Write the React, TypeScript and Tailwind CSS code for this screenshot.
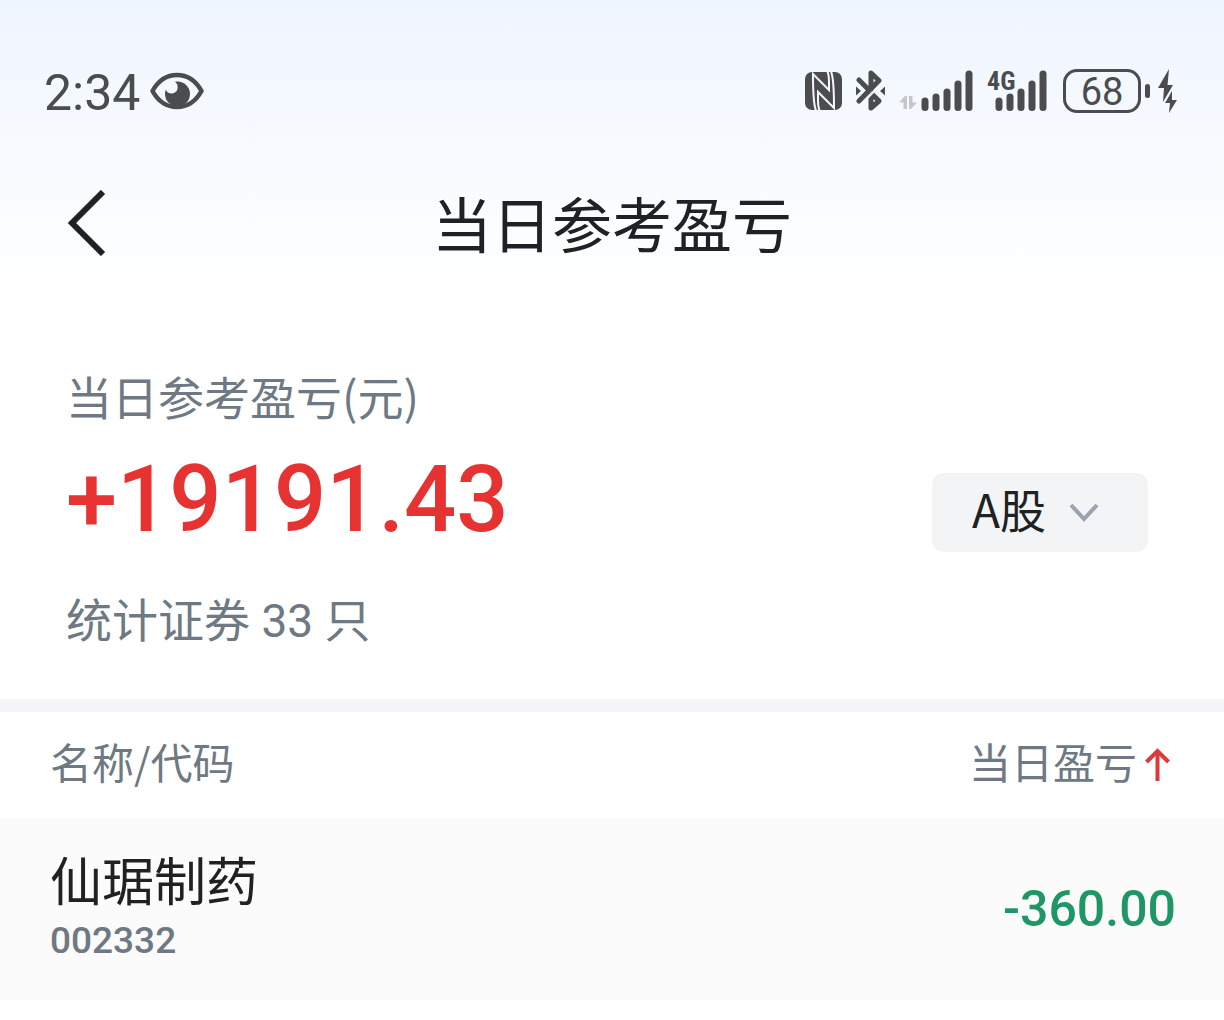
import { useState } from "react";

const latin = "font-[Roboto,'Noto_Sans_CJK_SC',sans-serif]";
const cjk = "font-['Noto_Sans_CJK_SC',sans-serif]";

const holdings = [{ name: "仙琚制药", code: "002332", profit: "-360.00" }];

function EyeIcon() {
  return (
    <svg width="54" height="38" viewBox="0 0 54 38" fill="none" aria-hidden="true">
      <path
        d="M2.5 19C8 9 16.5 3 27 3s19 6 24.500 16C46 29 37.500 35 27 35S8 29 2.500 19z"
        stroke="#4a4c4e"
        strokeWidth="4.500"
        strokeLinejoin="round"
      />
      <circle cx="27.500" cy="22" r="12.500" fill="#4a4c4e" />
      <path d="M14 12l7-4c5 1 7.500 4.500 6.500 9-1 4-6 6-9.500 3.500-1.500-1-2-2.500-2.500-4z" fill="#f4f8ff" />
      <path d="M23 9.500c3 0 5 1.500 6 4l3-2.500z" fill="#4a4c4e" />
    </svg>
  );
}

function NfcIcon() {
  return (
    <svg width="37" height="38" viewBox="0 0 37 38" fill="none" aria-hidden="true">
      <rect width="37" height="38" rx="7" fill="#4a4c4e" />
      <g stroke="#f5f8fe" strokeWidth="2">
        <path d="M11 38.500C9 34 8 28 8 2L24 18V9c0-4-.5-7-1.500-9.500" />
        <path d="M26 -.5C28 4 29 10 29 36L13 20v9c0 4 .5 7 1.500 9.500" />
      </g>
    </svg>
  );
}

function BluetoothIcon() {
  return (
    <svg width="30" height="42" viewBox="0 0 30 42" aria-hidden="true">
      <g fill="none" stroke="#4a4c4e" strokeWidth="5" strokeLinecap="round" strokeLinejoin="round">
        <path d="M3 10l10 10M15 19V3l8 7.500L3 31" />
        <path d="M15 29v9l8-7-6-6z" />
      </g>
      <path d="M10 30L27 12.500" stroke="#f5f8fe" strokeWidth="1.500" />
      <path d="M0 16.500L5 21 0 25.500zM29 16.500L24 21l5 4.500z" fill="#4a4c4e" />
    </svg>
  );
}

function DataArrowsIcon() {
  return (
    <svg width="18" height="14" viewBox="0 0 18 14" fill="#c3c6ca" aria-hidden="true">
      <path d="M0 6.500L6 0h2v13H4.500V6.500zM10 0h3.500v6.500H18L12 13h-2z" />
    </svg>
  );
}

function SignalIcon({ label }: { label?: string }) {
  return (
    <svg
      width={label ? 62 : 52}
      height="54"
      viewBox={label ? "-10 -6 62 54" : "0 -6 52 54"}
      role="img"
      aria-label="信号"
    >
      <path
        d="M4 31v6.500M15 27v10.500M26 22v15.500M37 14v23.500M48 4v33.500"
        stroke="#4a4c4e"
        strokeWidth="7"
        strokeLinecap="round"
      />
      {label && (
        <text x="-8" y="20" fontSize="26" fontWeight="700" fill="#4a4c4e" fontFamily="'Roboto Condensed', Roboto, sans-serif">
          {label}
        </text>
      )}
    </svg>
  );
}

function BoltIcon() {
  return (
    <svg width="19" height="44" viewBox="0 0 19 44" fill="#4a4c4e" aria-hidden="true">
      <path d="M11 0L0 19h6L5 33 15 16H9.500z" />
      <path d="M14 22L7 34h5l-1 10 8-13h-5z" />
    </svg>
  );
}

function StatusBar() {
  return (
    <div className="flex items-center justify-between pt-[67px] pr-[47px] pl-[44px] text-[#4a4c4e]">
      <div className="flex h-12 items-center gap-[10px]">
        <time className={`pt-1 text-[50px] leading-[48px] ${latin}`}>2:34</time>
        <EyeIcon />
      </div>
      <div className="flex h-12 items-center">
        <NfcIcon />
        <span className="ml-[14px]">
          <BluetoothIcon />
        </span>
        <span className="mt-6 mr-1 ml-[13px]">
          <DataArrowsIcon />
        </span>
        <SignalIcon />
        <span className="ml-3">
          <SignalIcon label="4G" />
        </span>
        <div
          className={`ml-4 flex h-11 w-[78px] items-center justify-center rounded-[14px] border-[3px] border-[#4a4c4e] pt-[2px] text-[38px] leading-none ${latin}`}
        >
          68
        </div>
        <span className="ml-1 h-[14px] w-[5px] rounded-full bg-[#4a4c4e]" />
        <span className="ml-2">
          <BoltIcon />
        </span>
      </div>
    </div>
  );
}

function MarketSelect() {
  const [market, setMarket] = useState("A股");

  return (
    <div className="relative">
      <select
        aria-label="市场"
        value={market}
        onChange={(e) => setMarket(e.target.value)}
        className={`h-[79px] w-[216px] appearance-none rounded-xl bg-[#f3f4f6] pb-2 pl-10 text-[46px] leading-[60px] text-[#202122] ${cjk}`}
      >
        <option>A股</option>
        <option>港股</option>
      </select>
      <svg
        className="pointer-events-none absolute top-[30px] right-[49px]"
        width="30"
        height="20"
        viewBox="0 0 30 20"
        fill="none"
        aria-hidden="true"
      >
        <path d="M2 2l13 14L28 2" stroke="#9aa4ae" strokeWidth="4" />
      </svg>
    </div>
  );
}

export default function App() {
  return (
    <div className={`bg-white text-[#202122] ${cjk}`}>
      <header className="h-[300px] bg-linear-to-b from-[#eff5ff] to-white">
        <StatusBar />
        <div className="grid grid-cols-[1fr_auto_1fr] items-center px-[66px] pt-16">
          <button type="button" aria-label="返回" className="w-10">
            <svg width="40" height="66" viewBox="0 0 40 66" fill="none" aria-hidden="true">
              <path d="M37 2L6 33l31 31" stroke="#202122" strokeWidth="6" />
            </svg>
          </button>
          <h1 className="pb-[2px] text-[60px] leading-[86px]">当日参考盈亏</h1>
        </div>
      </header>

      <section className="flex items-center justify-between pt-[62px] pr-[76px] pb-[37px] pl-[66px]">
        <div>
          <p className="text-[46px] leading-[66px] text-[#6e7983]">当日参考盈亏(元)</p>
          <p className={`pt-[6px] text-[92px] leading-[132px] font-medium text-[#e63332] ${latin}`}>+19191.43</p>
          <p className="pt-[18px] pb-2 text-[46px] leading-[66px] text-[#6e7983]">
            统计证券<span className={latin}> 33 </span>只
          </p>
        </div>
        <MarketSelect />
      </section>

      <div className="h-[13px] bg-[#f4f5f9]" />

      <table className="w-full">
        <thead>
          <tr className="h-[106px] text-[42px] leading-[60px] text-[#6e7983]">
            <th scope="col" className="pb-2 pl-[50px] text-left font-normal">
              名称/代码
            </th>
            <th scope="col" className="pr-[54px] pb-2 font-normal">
              <button type="button" className="ml-auto flex items-center gap-2">
                当日盈亏
                <svg className="mt-2" width="25" height="34" viewBox="0 0 25 34" fill="none" aria-hidden="true">
                  <path d="M12.500 33V4M1.500 14l11-11 11 11" stroke="#dc3a3a" strokeWidth="4" />
                </svg>
              </button>
            </th>
          </tr>
        </thead>
        <tbody>
          {holdings.map((item) => (
            <tr key={item.code} className="h-[182px] bg-[#fbfbfb]">
              <td className="pb-1 pl-[50px]">
                <div className="text-[52px] leading-[68px]">{item.name}</div>
                <div className={`text-[37px] leading-[56px] font-medium text-[#6e7983] ${latin}`}>{item.code}</div>
              </td>
              <td className={`pr-12 text-right text-[50px] font-medium text-[#1f9666] ${latin}`}>{item.profit}</td>
            </tr>
          ))}
        </tbody>
      </table>
    </div>
  );
}
